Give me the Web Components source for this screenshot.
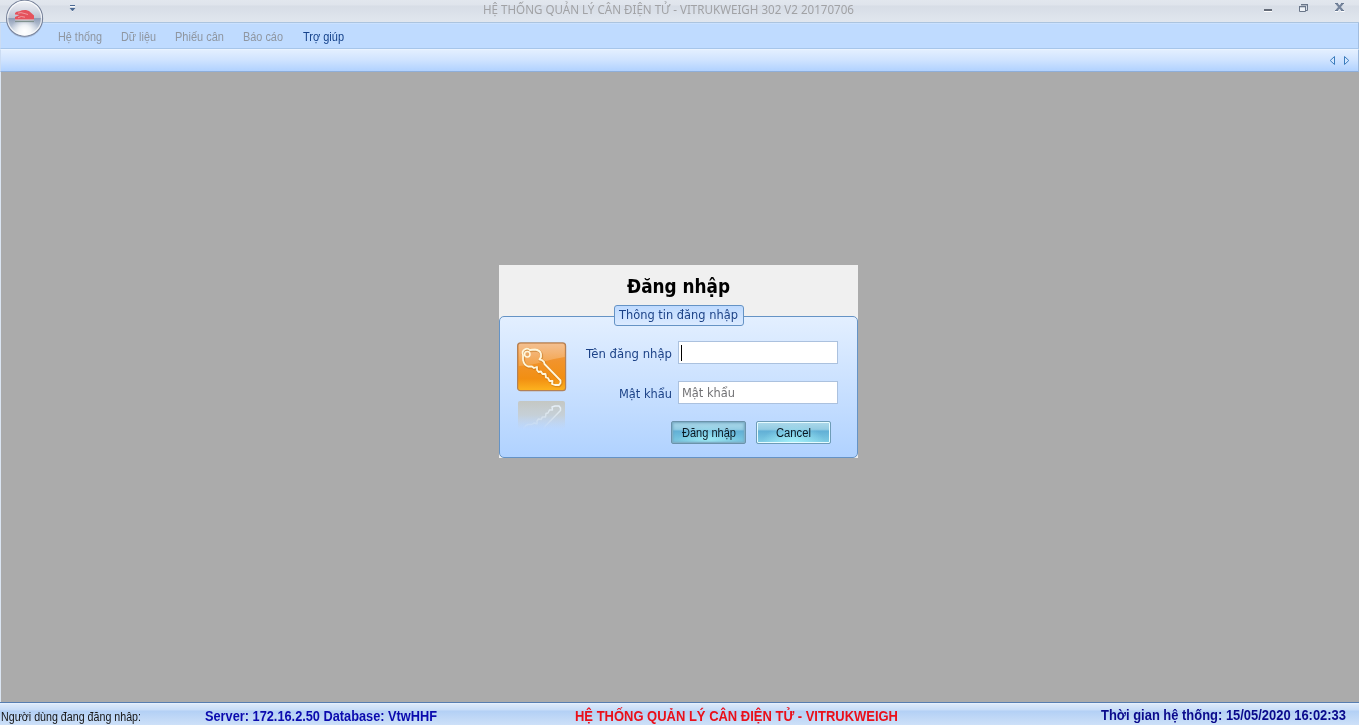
<!DOCTYPE html>
<html lang="vi">
<head>
<meta charset="utf-8">
<title>VITRUKWEIGH</title>
<style>
html,body{margin:0;height:100%;overflow:hidden}
body{font:12px "Liberation Sans",sans-serif}
</style>
</head>
<body>
<weigh-app></weigh-app>
<script>
function define(name, html, setup){
  const t=document.createElement('template');
  t.innerHTML=html;
  customElements.define(name,class extends HTMLElement{
    connectedCallback(){
      if(this.shadowRoot)return;
      this.attachShadow({mode:'open'}).appendChild(t.content.cloneNode(true));
      if(setup)setup.call(this,this.shadowRoot);
    }
  });
}

/* text run condensed or widened to the width given in "w" */
define('fit-text',`<style>
:host{display:block;white-space:nowrap;flex:none}
span{display:inline-block;transform-origin:0 50%}
</style><span><slot></slot></span>`,function(root){
  const w=+this.getAttribute('w'),s=root.querySelector('span');
  this.style.width=w+'px';
  s.style.transform='scaleX('+w/s.getBoundingClientRect().width+')';
});

define('app-orb',`<style>:host{display:block;width:40px;height:40px}svg{display:block}</style>
<svg width="40" height="40" viewBox="0 0 40 40">
<defs><linearGradient id="g" x1="0" y1="0" x2="0" y2="1"><stop offset="0" stop-color="#f2f4f8"/><stop offset=".3" stop-color="#d3d8e3"/><stop offset=".49" stop-color="#bac3d2"/><stop offset=".5" stop-color="#8f9db6"/><stop offset=".75" stop-color="#bcc7d7"/><stop offset="1" stop-color="#e8edf3"/></linearGradient>
<radialGradient id="h" cx=".5" cy=".88" r=".42"><stop offset="0" stop-color="#fff"/><stop offset=".4" stop-color="#fff" stop-opacity=".8"/><stop offset="1" stop-color="#fff" stop-opacity="0"/></radialGradient></defs>
<circle cx="19.6" cy="20.2" r="18.5" fill="#8390a8" opacity=".5"/>
<circle cx="19.6" cy="19.2" r="18" fill="url(#g)" stroke="#77829a" stroke-width="1.1"/>
<circle cx="19.6" cy="19.2" r="16.9" fill="url(#h)" stroke="#fff" stroke-opacity=".75" stroke-width="1.2"/>
<path d="M10 14Q11 12.3 14.5 12.3Q17 10.8 21 11L24 12L29 16.5V20.8H10V18L14.5 16L10 15.5Z" fill="#e5525c"/>
<path d="M13 14.2Q16 13 19 14.4L23 15.5M13 18.8Q16 16.5 20 18.2" fill="none" stroke="#f2a3a8" stroke-width=".9"/>
<path d="M10 21h19" stroke="#f0e4e4" stroke-width=".8"/><path d="M10 22.4h19" stroke="#80918e" stroke-width="1.4"/>
</svg>`);

define('title-bar',`<style>
:host{display:flex;box-sizing:border-box;height:23px;background:linear-gradient(#e2e7ee 0,#dfe4ec 5px,#d7dde6 6px,#e0e6ee 21px);border-bottom:1px solid #abc4df;align-items:flex-start}
.l{width:483px;flex:none}.l svg{display:block;margin:5px 0 0 68px}
fit-text{font:12px/14px "Noto Sans",sans-serif;color:#a1a2a5;margin-top:3px}
.r{margin-left:auto}.r svg{display:block}
</style>
<div class="l"><svg width="9" height="8"><path d="M2 .5h5" stroke="#4b6993"/><path d="M2 1.5h5M4 6.5h1" stroke="#fff" opacity=".8"/><path d="M1.6 3h5.8L4.5 6.2Z" fill="#4b6993"/></svg></div>
<fit-text w="371">HỆ THỐNG QUẢN LÝ CÂN ĐIỆN TỬ - VITRUKWEIGH 302 V2 20170706</fit-text>
<div class="r"><svg width="99" height="20"><path d="M4 9h8v2H4Z" fill="#646b78"/><path d="M4 11.5h8" stroke="#fff"/>
<path d="M41.5 4.5h6v6h-2" fill="none" stroke="#6a7689"/><path d="M41 4h7v1.4h-7Z" fill="#6a7689"/><path d="M39.5 6.5h6v5h-6Z" fill="#eef2f7" stroke="#6a7689"/><path d="M39 6h7v1.3h-7Z" fill="#6a7689"/>
<path d="M75 11.5h3.5M80.5 11.5h4" stroke="#fff"/><path d="M76.5 3.5l6 7M82.5 3.5l-6 7" stroke="#74839b" stroke-width="2"/><path d="M75 3.5h3M81 3.5h3M75 10.5h3M81 10.5h3" stroke="#6a7a92"/></svg></div>`);

define('menu-bar',`<style>
:host{display:flex;box-sizing:border-box;height:26px;background:#bfdbff;border-bottom:1px solid #a7c6ea;border-left:1px solid #cbdcf3;border-right:1px solid #a2bddf;box-shadow:inset 0 1px #cae1ff;padding:7px 0 0 57px;gap:19px}
fit-text{font:12.5px/14px "Liberation Sans",sans-serif;color:#8f96a0}
.on{color:#15428b;margin-left:1px}
</style>
<fit-text w="44">Hệ thống</fit-text><fit-text w="35">Dữ liệu</fit-text><fit-text w="49">Phiếu cân</fit-text><fit-text w="40">Báo cáo</fit-text><fit-text class="on" w="41">Trợ giúp</fit-text>`);

define('tab-strip',`<style>
:host{display:flex;box-sizing:border-box;height:23px;justify-content:flex-end;background:linear-gradient(#e3efff,#d1e4ff 45%,#b1d2ff);border-left:1px solid #cbdcf3;border-right:1px solid #9bb7da;border-bottom:1px solid #8eaeda;border-top:1px solid #eaf3ff}
svg{display:block;margin:5px 7px 0 0}
</style><svg width="22" height="11"><path d="M5.5 1.5v8L1.2 5.5ZM15.5 1.5v8l4.3-4Z" fill="#d4e7ff" stroke="#3c7dbd"/></svg>`);

define('key-icon',`<style>:host{display:block;width:50px;height:90px}svg{display:block}</style>
<svg width="50" height="90" viewBox="0 0 50 90">
<defs><linearGradient id="o" x1="0" y1="0" x2="0" y2="1"><stop offset="0" stop-color="#ee9d55"/><stop offset=".4" stop-color="#f1932a"/><stop offset=".75" stop-color="#f28f12"/><stop offset="1" stop-color="#fdb41f"/></linearGradient>
<linearGradient id="s" x1="0" y1="0" x2="0" y2="1"><stop offset="0" stop-color="#fff" stop-opacity=".35"/><stop offset="1" stop-color="#fff" stop-opacity=".15"/></linearGradient>
<linearGradient id="f" x1="0" y1="0" x2="0" y2="1"><stop offset="0" stop-color="#c4c6c0" stop-opacity=".95"/><stop offset=".5" stop-color="#c8ccca" stop-opacity=".75"/><stop offset="1" stop-color="#c5cfdc" stop-opacity="0"/></linearGradient>
<linearGradient id="m" x1="0" y1="64" x2="0" y2="88" gradientUnits="userSpaceOnUse"><stop offset="0" stop-color="#fff"/><stop offset="1" stop-color="#000"/></linearGradient><mask id="k"><rect y="59" width="50" height="29" fill="url(#m)"/></mask>
<path id="key" d="M6 13C4 8 10 5 13 8L18 7.5Q23 8 24 12L24 15L22.5 17.5L25 18.2L27 20L27.5 22L43.5 38.5V41L42 43H38L35 42L35.5 39L32.5 39L31 36L29 35.5L28.5 32L25.5 32L24 29.5L21.5 30L20 28L20 25L17 26L15 24.5H11Q7 23 6 18Z" fill="none" stroke-linejoin="round"/></defs>
<rect x=".6" y=".9" width="48" height="47.8" rx="3" fill="url(#o)" stroke="#b38157" stroke-width="1.2"/>
<path d="M1.8 3Q2 1.7 4 1.7H45.5Q47.7 1.7 47.7 4V15Q35 17 25 20T1.8 24Z" fill="url(#s)"/>
<use href="#key" stroke="#b96a12" stroke-opacity=".45" stroke-width="3" x=".6" y=".7"/>
<use href="#key" stroke="#fff7dc" stroke-width="1.8"/><circle cx="10.3" cy="12.3" r="2.7" fill="#e9a764" stroke="#fff7dc" stroke-width="1.5"/>
<rect x="1" y="59" width="47" height="28" rx="2" fill="url(#f)"/>
<g mask="url(#k)"><use href="#key" stroke="#e6f0f8" stroke-width="1.5" transform="translate(0 107) scale(1 -1)"/></g>
</svg>`);

define('text-box',`<style>
:host{display:flex;box-sizing:border-box;width:160px;height:23px;background:#fff;border:1px solid #abc1de;padding:3px 0 0 3px;color:#727275}
i{width:1.4px;height:16px;background:#000;margin-left:-1px;display:none}
:host([focused]) i{display:block}
</style><i></i><slot></slot>`);

define('glass-button',`<style>
:host{display:flex;box-sizing:border-box;width:75px;height:23px;justify-content:center;border:1px solid #6d9cb7;border-radius:2px;box-shadow:inset 0 0 0 1px #e5fbff;background:radial-gradient(ellipse at 50% 100%,#a5f2fb 0,transparent 60%) 0 0/100% 100%,linear-gradient(#b0dbec 0,#94cce3 36%,#62b0d6 44%,#83d0e6 100%);background-origin:border-box;padding-top:4px;color:#0a1720;font:12.5px/14px "Liberation Sans",sans-serif}
:host([default]){border-color:#6b93aa;box-shadow:inset 0 0 0 1px #7fb0c8,inset 0 0 3px 1px #6fa5bf}
</style><slot></slot>`);

define('login-dialog',`<style>
:host{display:flex;flex-direction:column;width:359px;height:193px;background:#f0f0f0;position:relative;font:12.5px/16px "DejaVu Sans Condensed","DejaVu Sans",sans-serif;color:#1c4287}
h1{margin:0;height:51px;box-sizing:border-box;padding-top:9px;display:flex;justify-content:center;color:#000;font:bold 19px/24px "DejaVu Sans Condensed","DejaVu Sans",sans-serif}
.panel{box-sizing:border-box;height:142px;border:1px solid #6593c5;border-radius:5px;background:linear-gradient(#e3efff,#b0d2ff);display:flex;padding:25px 0 0 17px}
.cap{position:absolute;left:115px;top:40px;width:130px;height:21px;box-sizing:border-box;border:1px solid #6593c5;border-radius:3px;background:linear-gradient(#bedaff,#dbeaff);padding:1px 0 0 4px}
.form{display:flex;flex-direction:column;width:271px;margin-top:-1px}
.row{display:flex;justify-content:flex-end;gap:6px;height:40px}
.row>fit-text{margin-top:5px}
.btns{display:flex;justify-content:flex-end;gap:10px;padding-right:7px}
</style>
<h1><fit-text w="103">Đăng nhập</fit-text></h1>
<div class="panel"><key-icon></key-icon><div class="form">
<div class="row"><fit-text w="86">Tên đăng nhập</fit-text><text-box focused></text-box></div>
<div class="row"><fit-text w="53">Mật khẩu</fit-text><text-box><fit-text w="53">Mật khẩu</fit-text></text-box></div>
<div class="btns"><glass-button default><fit-text w="54">Đăng nhập</fit-text></glass-button><glass-button><fit-text w="35">Cancel</fit-text></glass-button></div>
</div></div>
<div class="cap"><fit-text w="119">Thông tin đăng nhập</fit-text></div>`);

define('status-bar',`<style>
:host{display:flex;box-sizing:border-box;height:23px;border-top:1px solid #567db1;background:linear-gradient(#e8f2ff 0,#d7e6f9 2px,#c7dcf8 7px,#b3d0f5 8px,#cde0f8 22px);align-items:flex-start;padding:6px 13px 0 1px;font:bold 14px/14px "Liberation Sans",sans-serif;color:#0a0aae}
.u{font-size:12px;font-weight:normal;color:#151515;margin:1px 64px 0 0}
.s{margin-right:138px}.c{color:#ea0f1a}.t{margin:-1px 0 0 auto;color:#0a0a8c}
</style><fit-text class="u" w="140">Người dùng đang đăng nhâp:</fit-text><fit-text class="s" w="232">Server: 172.16.2.50 Database: VtwHHF</fit-text><fit-text class="c" w="323">HỆ THỐNG QUẢN LÝ CÂN ĐIỆN TỬ - VITRUKWEIGH</fit-text><fit-text class="t" w="245">Thời gian hệ thống: 15/05/2020 16:02:33</fit-text>`);

define('weigh-app',`<style>
:host{display:flex;flex-direction:column;height:725px;position:relative;overflow:hidden}
main{flex:1;background:#ababab;border-left:1px solid #dbe5f2;display:flex;justify-content:center;align-items:flex-start;padding:193px 3px 0 0}
app-orb{position:absolute;left:5px;top:-1px}
</style><title-bar></title-bar><menu-bar></menu-bar><tab-strip></tab-strip><main><login-dialog></login-dialog></main><status-bar></status-bar><app-orb></app-orb>`);
</script>
</body>
</html>
